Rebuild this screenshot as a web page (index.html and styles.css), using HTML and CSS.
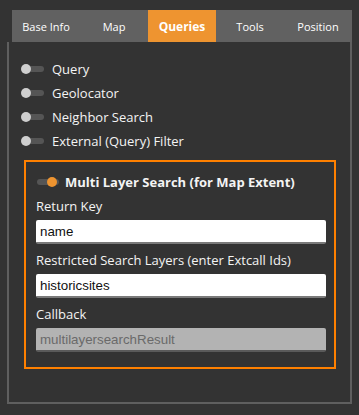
FILE: index.html
```html
<!DOCTYPE html>
<html>
<head>
<meta charset="utf-8">
<link rel="stylesheet" href="styles.css">
</head>
<body>
<div class="tabs">
  <div class="tab">Base Info</div>
  <div class="tab">Map</div>
  <div class="tab active">Queries</div>
  <div class="tab">Tools</div>
  <div class="tab">Position</div>
</div>
<div class="panel">
  <div class="row"><span class="toggle"><span class="track"></span><span class="knob"></span></span><span class="label">Query</span></div>
  <div class="row"><span class="toggle"><span class="track"></span><span class="knob"></span></span><span class="label">Geolocator</span></div>
  <div class="row"><span class="toggle"><span class="track"></span><span class="knob"></span></span><span class="label">Neighbor Search</span></div>
  <div class="row"><span class="toggle"><span class="track"></span><span class="knob"></span></span><span class="label">External (Query) Filter</span></div>
  <div class="box">
    <div class="row on"><span class="toggle"><span class="track"></span><span class="knob"></span></span><span class="label strong">Multi Layer Search (for Map Extent)</span></div>
    <div class="field-label">Return Key</div>
    <input class="field" type="text" value="name">
    <div class="field-label">Restricted Search Layers (enter Extcall Ids)</div>
    <input class="field" type="text" value="historicsites">
    <div class="field-label">Callback</div>
    <input class="field disabled" type="text" value="multilayersearchResult" disabled>
  </div>
</div>
</body>
</html>
```
FILE: styles.css
```css
html, body {
  margin: 0;
  padding: 0;
  background: #333333;
}
body {
  width: 359px;
  height: 415px;
  overflow: hidden;
  font-family: "Open Sans", "Noto Sans", sans-serif;
  color: #f4f4f4;
}
.tabs {
  display: flex;
  margin: 10px 0 0 12px;
  width: 340px;
  height: 32px;
  background: #616161;
}
.tab {
  width: 68px;
  display: flex;
  align-items: center;
  justify-content: center;
  font-size: 11px;
  color: #ffffff;
}
.tab.active {
  background: #ee9430;
  font-weight: bold;
  font-size: 12px;
}
.panel {
  margin-left: 7px;
  width: 345px;
  height: 362px;
  border: 2px solid #5f5f5f;
  border-top: none;
  padding-top: 15px;
  box-sizing: border-box;
}
.row {
  display: flex;
  align-items: center;
  height: 24px;
  padding-left: 12px;
}
.toggle {
  position: relative;
  width: 24px;
  height: 10px;
  flex: none;
}
.track {
  position: absolute;
  left: 1px;
  top: 2px;
  width: 22px;
  height: 6px;
  border-radius: 3px;
  background: #555555;
}
.knob {
  position: absolute;
  left: 0;
  top: 0;
  width: 10px;
  height: 10px;
  border-radius: 50%;
  background: #cfcfcf;
}
.label {
  margin-left: 7px;
  font-size: 13px;
}
.box {
  margin: 7px 14px 0 15px;
  border: 2px solid #ff8000;
  padding: 12px 11px 15px 10px;
}
.row.on {
  padding-left: 0;
  height: 16px;
}
.row.on .knob {
  left: 11px;
  background: #ee9430;
}
.row.on .label {
  margin-left: 5px;
}
.strong {
  font-weight: bold;
}
.field-label {
  font-size: 13px;
  line-height: 20px;
  margin: 6px 0 4px;
}
.field {
  display: block;
  box-sizing: border-box;
  width: 290px;
  height: 24px;
  margin: 0;
  padding: 0 4px;
  border: none;
  border-bottom: 2px solid #7a7a7a;
  border-radius: 2px;
  background: #ffffff;
  color: #111111;
  font-family: "Liberation Sans", Arial, sans-serif;
  font-size: 13.33px;
  outline: none;
}
.field.disabled {
  background: #b3b3b3;
  color: #6a6a6a;
  border-bottom-color: #5a5a5a;
}
```
